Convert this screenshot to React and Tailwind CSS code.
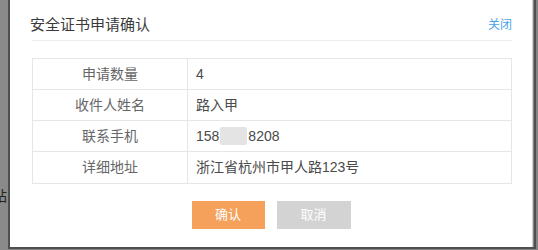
const rows = [
  { label: '申请数量', value: '4' },
  { label: '收件人姓名', value: '路入甲' },
  { label: '联系手机', value: 'phone' },
  { label: '详细地址', value: '浙江省杭州市甲人路123号' },
];

const font = { fontFamily: '"Liberation Sans", "Noto Sans CJK SC", sans-serif' };

function Phone() {
  return (
    <span className="flex items-center">
      <span>158</span>
      <span className="w-[27px] h-[18px] bg-[#e4e4e4] rounded-[2px] mx-[1px]" />
      <span>8208</span>
    </span>
  );
}

export default function App() {
  return (
    <div className="w-[538px] h-[250px] bg-[#858585] flex overflow-hidden" style={font}>
      {/* backdrop strip */}
      <div className="w-[8px] h-full flex flex-col bg-[#8a8a8a] overflow-hidden">
        <div className="h-[188px]" />
        <div className="text-[14px] leading-[16px] text-[#222] -ml-[7px]">站</div>
      </div>

      {/* dialog */}
      <div className="w-[528px] h-[249px] border-l-2 border-r-2 border-b-2 border-[#4f4f4f] flex">
        <div className="w-[523px] h-full bg-white border-r border-[#cfcfcf] flex flex-col pl-[22px] pr-[20px]">
          <div className="flex items-center justify-between pt-[15px] pb-[5px] border-b border-[#ececec]">
            <span className="text-[15px] leading-[20px] text-[#3a3a3a] -ml-[2px]">安全证书申请确认</span>
            <span className="text-[12px] leading-[20px] text-[#4aa3ea] cursor-pointer">关闭</span>
          </div>

          <div className="mt-[17px] border border-[#e6e6e6] text-[14px]">
            {rows.map((r, i) => (
              <div
                key={r.label}
                className={`flex h-[31px] ${i < rows.length - 1 ? 'border-b border-[#e6e6e6]' : ''}`}
              >
                <div className="w-[155px] border-r border-[#e6e6e6] flex items-center justify-center text-[#666]">
                  {r.label}
                </div>
                <div className="flex-1 flex items-center pl-[8px] text-[#4a4a4a]">
                  {r.value === 'phone' ? <Phone /> : r.value}
                </div>
              </div>
            ))}
          </div>

          <div className="mt-[17px] flex justify-center gap-[12px] -ml-[2px]">
            <button className="w-[73px] h-[28px] bg-[#f6a15b] text-white text-[13px]">确认</button>
            <button className="w-[74px] h-[28px] bg-[#d3d3d3] text-white text-[13px]">取消</button>
          </div>
        </div>
      </div>
    </div>
  );
}
